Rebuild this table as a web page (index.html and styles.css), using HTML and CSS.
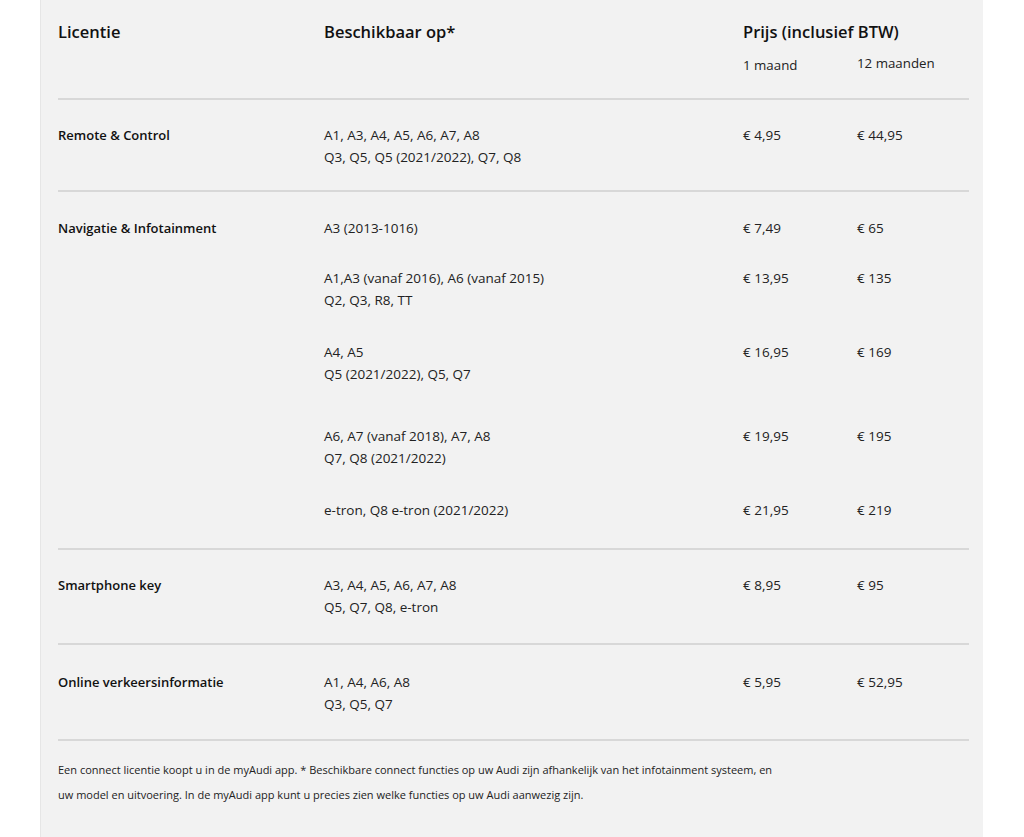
FILE: index.html
```html
<!DOCTYPE html>
<html lang="nl">
<head>
<meta charset="utf-8">
<title>Connect licenties</title>
<link rel="stylesheet" href="styles.css">
</head>
<body>
<div class="panel">
  <div class="head">
    <div class="h-title">Licentie</div>
    <div class="h-title">Beschikbaar op*</div>
    <div class="h-price">
      <div class="h-title">Prijs (inclusief BTW)</div>
      <div class="periods">
        <span class="p1">1 maand</span>
        <span class="p12">12 maanden</span>
      </div>
    </div>
  </div>

  <div class="section s1">
    <div class="label">Remote &amp; Control</div>
    <div class="entries">
      <div class="entry">
        <div class="models">A1, A3, A4, A5, A6, A7, A8<br>Q3, Q5, Q5 (2021/2022), Q7, Q8</div>
        <div>€ 4,95</div>
        <div>€ 44,95</div>
      </div>
    </div>
  </div>

  <div class="section s2">
    <div class="label">Navigatie &amp; Infotainment</div>
    <div class="entries">
      <div class="entry e1">
        <div class="models">A3 (2013-1016)</div>
        <div>€ 7,49</div>
        <div>€ 65</div>
      </div>
      <div class="entry e2">
        <div class="models">A1,A3 (vanaf 2016), A6 (vanaf 2015)<br>Q2, Q3, R8, TT</div>
        <div>€ 13,95</div>
        <div>€ 135</div>
      </div>
      <div class="entry e3">
        <div class="models">A4, A5<br>Q5 (2021/2022), Q5, Q7</div>
        <div>€ 16,95</div>
        <div>€ 169</div>
      </div>
      <div class="entry e4">
        <div class="models">A6, A7 (vanaf 2018), A7, A8<br>Q7, Q8 (2021/2022)</div>
        <div>€ 19,95</div>
        <div>€ 195</div>
      </div>
      <div class="entry">
        <div class="models">e-tron, Q8 e-tron (2021/2022)</div>
        <div>€ 21,95</div>
        <div>€ 219</div>
      </div>
    </div>
  </div>

  <div class="section s3">
    <div class="label">Smartphone key</div>
    <div class="entries">
      <div class="entry">
        <div class="models">A3, A4, A5, A6, A7, A8<br>Q5, Q7, Q8, e-tron</div>
        <div>€ 8,95</div>
        <div>€ 95</div>
      </div>
    </div>
  </div>

  <div class="section s4">
    <div class="label">Online verkeersinformatie</div>
    <div class="entries">
      <div class="entry">
        <div class="models">A1, A4, A6, A8<br>Q3, Q5, Q7</div>
        <div>€ 5,95</div>
        <div>€ 52,95</div>
      </div>
    </div>
  </div>

  <p class="note">Een connect licentie koopt u in de myAudi app. * Beschikbare connect functies op uw Audi zijn afhankelijk van het infotainment systeem, en<br>uw model en uitvoering. In de myAudi app kunt u precies zien welke functies op uw Audi aanwezig zijn.</p>
</div>
</body>
</html>
```

FILE: styles.css
```css
html, body {
  margin: 0;
  padding: 0;
  background: #ffffff;
}

body {
  font-family: "Open Sans", "Noto Sans", "Liberation Sans", sans-serif;
  color: #222;
}

.panel {
  margin-left: 40px;
  width: 943px;
  min-height: 837px;
  box-sizing: border-box;
  background: #f2f2f2;
  border-left: 1px solid #e6e6e6;
  padding: 21px 14px 0 17px;
}

.head {
  display: grid;
  grid-template-columns: 266px 419px 1fr;
  padding-bottom: 22px;
  border-bottom: 2px solid #d8d8d8;
}

.h-title {
  font-size: 16.5px;
  line-height: 22px;
  font-weight: 600;
  color: #111;
}

.periods {
  display: grid;
  grid-template-columns: 114px 1fr;
  margin-top: 11px;
  font-size: 13.3px;
  line-height: 22px;
  color: #222;
}

.p12 {
  position: relative;
  top: -2px;
}

.section {
  display: grid;
  grid-template-columns: 266px 1fr;
  border-bottom: 2px solid #d8d8d8;
  font-size: 13.5px;
  line-height: 22px;
}

.label {
  font-size: 13px;
  font-weight: 600;
  color: #111;
}

.entries {
  display: flex;
  flex-direction: column;
}

.entry {
  display: grid;
  grid-template-columns: 419px 114px 1fr;
}

.s1 { padding: 24px 0 22px; }
.s2 { padding: 25px 0 27px; }
.s3 { padding: 24px 0 25px; }
.s4 { padding: 26px 0 24px; }

.e1 { margin-bottom: 28px; }
.e2 { margin-bottom: 30px; }
.e3 { margin-bottom: 40px; }
.e4 { margin-bottom: 30px; }

.note {
  margin: 0;
  padding-top: 16px;
  font-size: 11px;
  line-height: 25px;
  color: #222;
}
```
